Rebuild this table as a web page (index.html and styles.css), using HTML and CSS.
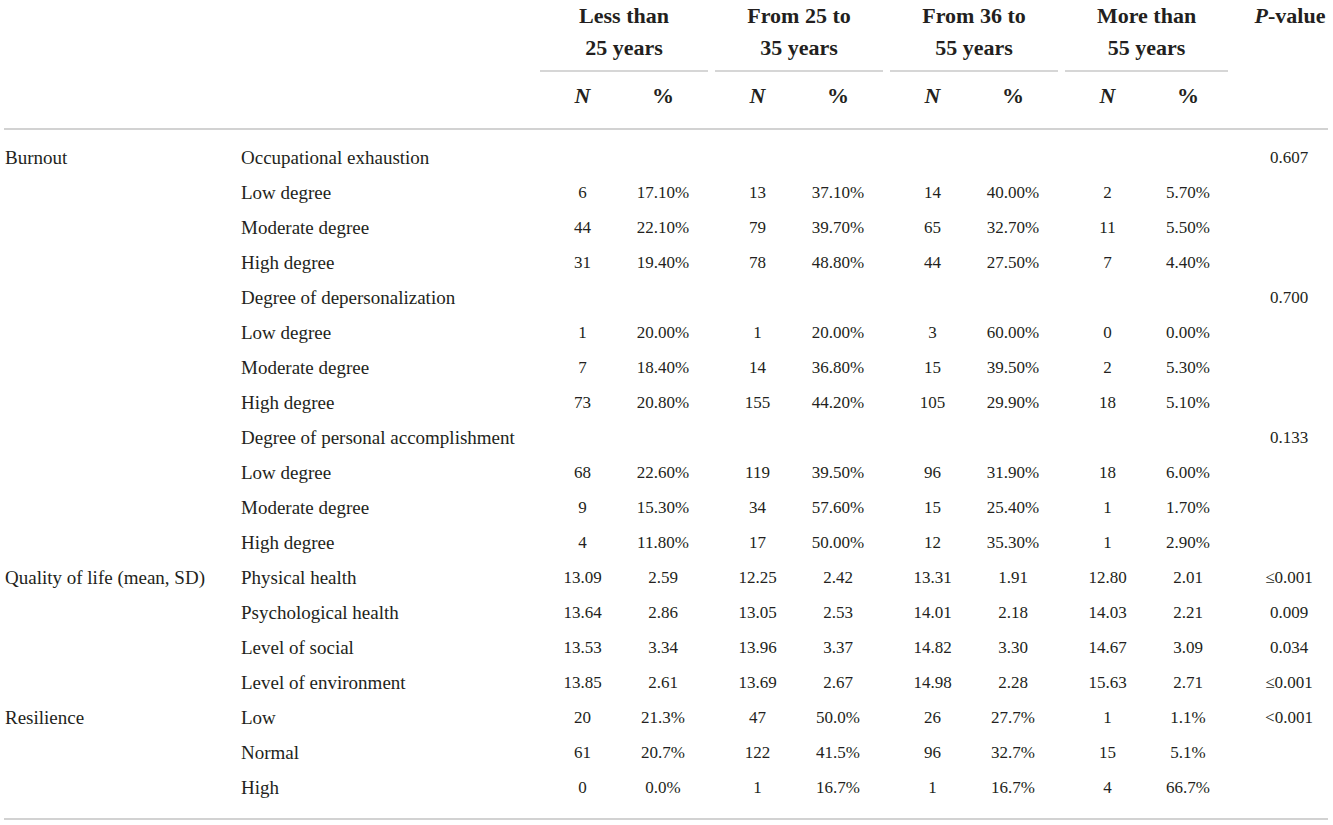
FILE: index.html
```html
<!DOCTYPE html>
<html lang="en">
<head>
<meta charset="utf-8">
<title>Table</title>
<link rel="stylesheet" href="styles.css">
</head>
<body>
<table class="data">
  <colgroup>
    <col class="c-cat"><col class="c-sub">
    <col class="c-n"><col class="c-p">
    <col class="c-n"><col class="c-p">
    <col class="c-n"><col class="c-p">
    <col class="c-n"><col class="c-p">
    <col class="c-pv">
  </colgroup>
  <thead>
    <tr class="h1">
      <th rowspan="2"></th><th rowspan="2"></th>
      <th colspan="2"><div class="grp">Less than<br>25 years</div></th>
      <th colspan="2"><div class="grp">From 25 to<br>35 years</div></th>
      <th colspan="2"><div class="grp">From 36 to<br>55 years</div></th>
      <th colspan="2"><div class="grp grp-last">More than<br>55 years</div></th>
      <th rowspan="2" class="pvh"><i>P</i>-value</th>
    </tr>
    <tr class="h2">
      <th class="n"><i>N</i></th><th class="p">%</th>
      <th class="n"><i>N</i></th><th class="p">%</th>
      <th class="n"><i>N</i></th><th class="p">%</th>
      <th class="n"><i>N</i></th><th class="p">%</th>
    </tr>
  </thead>
  <tbody>
    <tr class="first"><td class="lab">Burnout</td><td class="lab">Occupational exhaustion</td><td></td><td class="p"></td><td></td><td class="p"></td><td></td><td class="p"></td><td></td><td class="p"></td><td class="pv">0.607</td></tr>
    <tr><td></td><td class="lab">Low degree</td><td>6</td><td class="p">17.10%</td><td>13</td><td class="p">37.10%</td><td>14</td><td class="p">40.00%</td><td>2</td><td class="p">5.70%</td><td class="pv"></td></tr>
    <tr><td></td><td class="lab">Moderate degree</td><td>44</td><td class="p">22.10%</td><td>79</td><td class="p">39.70%</td><td>65</td><td class="p">32.70%</td><td>11</td><td class="p">5.50%</td><td class="pv"></td></tr>
    <tr><td></td><td class="lab">High degree</td><td>31</td><td class="p">19.40%</td><td>78</td><td class="p">48.80%</td><td>44</td><td class="p">27.50%</td><td>7</td><td class="p">4.40%</td><td class="pv"></td></tr>
    <tr><td></td><td class="lab">Degree of depersonalization</td><td></td><td class="p"></td><td></td><td class="p"></td><td></td><td class="p"></td><td></td><td class="p"></td><td class="pv">0.700</td></tr>
    <tr><td></td><td class="lab">Low degree</td><td>1</td><td class="p">20.00%</td><td>1</td><td class="p">20.00%</td><td>3</td><td class="p">60.00%</td><td>0</td><td class="p">0.00%</td><td class="pv"></td></tr>
    <tr><td></td><td class="lab">Moderate degree</td><td>7</td><td class="p">18.40%</td><td>14</td><td class="p">36.80%</td><td>15</td><td class="p">39.50%</td><td>2</td><td class="p">5.30%</td><td class="pv"></td></tr>
    <tr><td></td><td class="lab">High degree</td><td>73</td><td class="p">20.80%</td><td>155</td><td class="p">44.20%</td><td>105</td><td class="p">29.90%</td><td>18</td><td class="p">5.10%</td><td class="pv"></td></tr>
    <tr><td></td><td class="lab">Degree of personal accomplishment</td><td></td><td class="p"></td><td></td><td class="p"></td><td></td><td class="p"></td><td></td><td class="p"></td><td class="pv">0.133</td></tr>
    <tr><td></td><td class="lab">Low degree</td><td>68</td><td class="p">22.60%</td><td>119</td><td class="p">39.50%</td><td>96</td><td class="p">31.90%</td><td>18</td><td class="p">6.00%</td><td class="pv"></td></tr>
    <tr><td></td><td class="lab">Moderate degree</td><td>9</td><td class="p">15.30%</td><td>34</td><td class="p">57.60%</td><td>15</td><td class="p">25.40%</td><td>1</td><td class="p">1.70%</td><td class="pv"></td></tr>
    <tr><td></td><td class="lab">High degree</td><td>4</td><td class="p">11.80%</td><td>17</td><td class="p">50.00%</td><td>12</td><td class="p">35.30%</td><td>1</td><td class="p">2.90%</td><td class="pv"></td></tr>
    <tr><td class="lab">Quality of life (mean, SD)</td><td class="lab">Physical health</td><td>13.09</td><td class="p">2.59</td><td>12.25</td><td class="p">2.42</td><td>13.31</td><td class="p">1.91</td><td>12.80</td><td class="p">2.01</td><td class="pv">≤0.001</td></tr>
    <tr><td></td><td class="lab">Psychological health</td><td>13.64</td><td class="p">2.86</td><td>13.05</td><td class="p">2.53</td><td>14.01</td><td class="p">2.18</td><td>14.03</td><td class="p">2.21</td><td class="pv">0.009</td></tr>
    <tr><td></td><td class="lab">Level of social</td><td>13.53</td><td class="p">3.34</td><td>13.96</td><td class="p">3.37</td><td>14.82</td><td class="p">3.30</td><td>14.67</td><td class="p">3.09</td><td class="pv">0.034</td></tr>
    <tr><td></td><td class="lab">Level of environment</td><td>13.85</td><td class="p">2.61</td><td>13.69</td><td class="p">2.67</td><td>14.98</td><td class="p">2.28</td><td>15.63</td><td class="p">2.71</td><td class="pv">≤0.001</td></tr>
    <tr><td class="lab">Resilience</td><td class="lab">Low</td><td>20</td><td class="p">21.3%</td><td>47</td><td class="p">50.0%</td><td>26</td><td class="p">27.7%</td><td>1</td><td class="p">1.1%</td><td class="pv">&lt;0.001</td></tr>
    <tr><td></td><td class="lab">Normal</td><td>61</td><td class="p">20.7%</td><td>122</td><td class="p">41.5%</td><td>96</td><td class="p">32.7%</td><td>15</td><td class="p">5.1%</td><td class="pv"></td></tr>
    <tr class="last"><td></td><td class="lab">High</td><td>0</td><td class="p">0.0%</td><td>1</td><td class="p">16.7%</td><td>1</td><td class="p">16.7%</td><td>4</td><td class="p">66.7%</td><td class="pv"></td></tr>
  </tbody>
</table>
</body>
</html>
```
FILE: styles.css
```css
html, body {
  margin: 0;
  padding: 0;
  background: #ffffff;
}

body {
  font-family: "Liberation Serif", "Times New Roman", serif;
  color: #231f20;
}

.data {
  margin-left: 4px;
  width: 1324px;
  table-layout: fixed;
  border-collapse: collapse;
}

.c-cat { width: 236px; }
.c-sub { width: 300px; }
.c-n { width: 85px; }
.c-p { width: 90px; }
.c-pv { width: 88px; }

th, td {
  padding: 0;
}

/* header */
thead th {
  font-weight: bold;
  font-size: 22px;
  text-align: center;
  vertical-align: top;
}

.h1 th {
  line-height: 32px;
}

.grp {
  margin-right: 7px;
  padding-top: 0;
  padding-bottom: 6px;
  border-bottom: 2px solid #d6d6d6;
}

.grp-last {
  margin-right: 12px;
}

.h2 th {
  line-height: 24px;
  padding-top: 12px;
  padding-bottom: 20px;
}

.h2 th.p {
  padding-right: 14px;
}

.pvh {
  padding-left: 12px !important;
  white-space: nowrap;
}

thead {
  border-bottom: 2px solid #d2d2d2;
}

/* body */
tbody td {
  font-size: 17px;
  line-height: 35px;
  text-align: center;
  white-space: nowrap;
}

tbody td.p {
  padding-right: 14px;
}

tbody td.pv {
  padding-left: 10px;
}

tbody td.lab {
  font-size: 19px;
  text-align: left;
  padding-left: 1px;
}

tbody tr.first td {
  padding-top: 10px;
}

tbody tr.last td {
  padding-bottom: 13px;
}

tbody {
  border-bottom: 2px solid #d2d2d2;
}
```
